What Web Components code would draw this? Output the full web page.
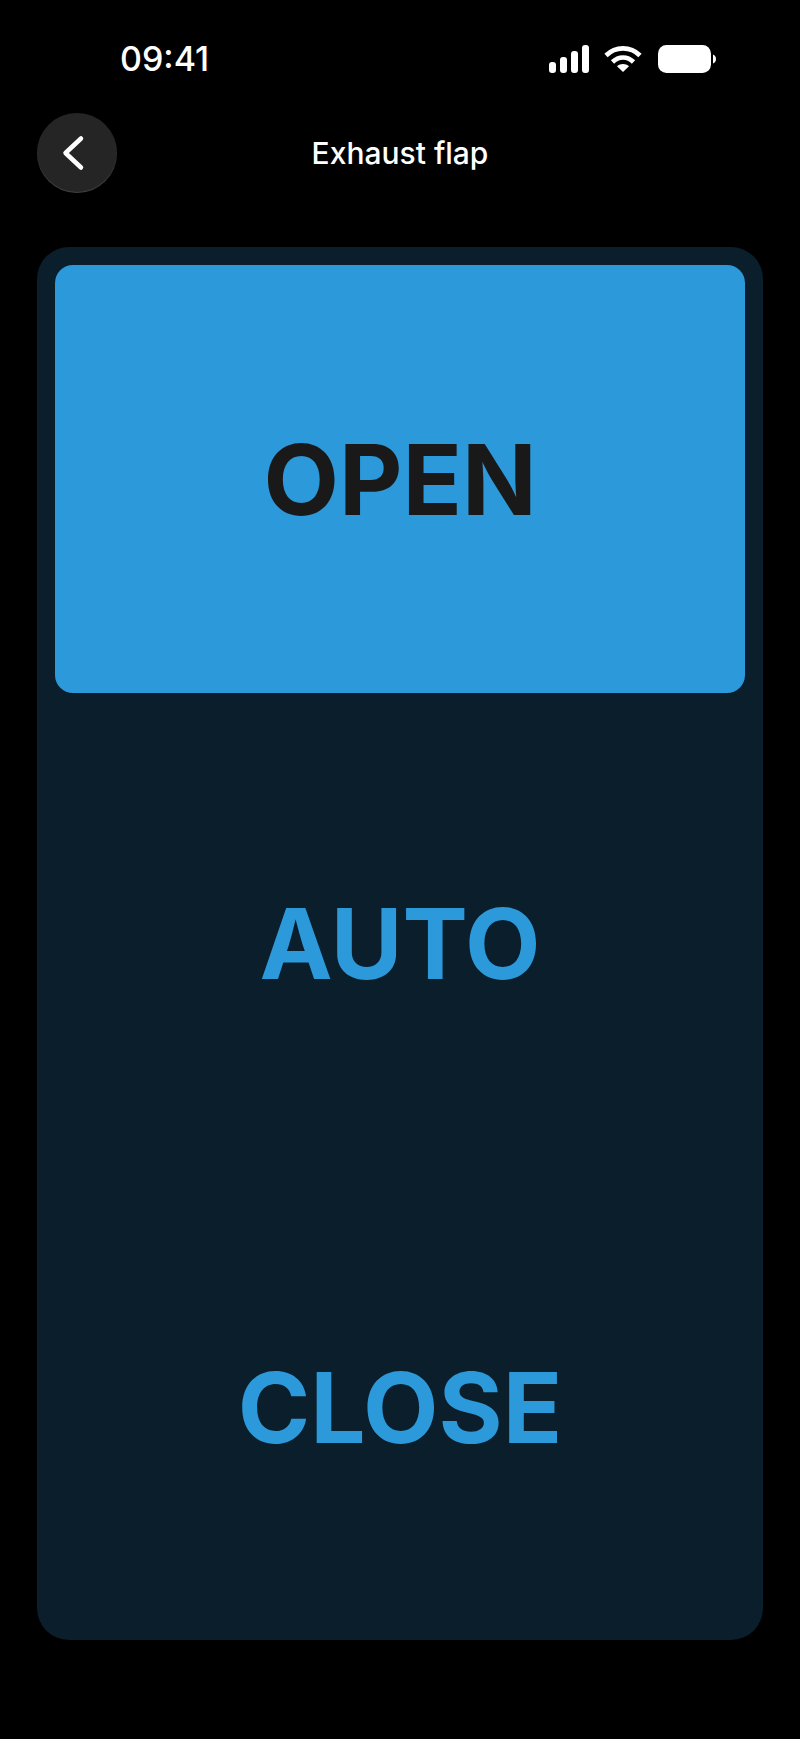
<!DOCTYPE html>
<html>
<head>
<meta charset="utf-8">
<style>
    html, body { margin: 0; background: #000; }
    body { font-family: Inter, "Liberation Sans", sans-serif; color: #fff; }
</style>
</head>
<body>
<flap-screen>
    <status-bar slot="status" time="09:41"></status-bar>
    <nav-header slot="header" title="Exhaust flap"></nav-header>
    <mode-panel>
        <mode-option active>OPEN</mode-option>
        <mode-option>AUTO</mode-option>
        <mode-option>CLOSE</mode-option>
    </mode-panel>
</flap-screen>
<script>
class FlapScreen extends HTMLElement {
    constructor() {
        super();
        const shadow = this.attachShadow({ mode: 'open' });
        shadow.innerHTML = `
            <style>
                :host {
                    display: flex;
                    flex-direction: column;
                    width: 800px;
                    height: 1739px;
                    background: #000;
                    box-sizing: border-box;
                    overflow: hidden;
                }
                main {
                    padding: 0 37px;
                }
            </style>
            <slot name="status"></slot>
            <slot name="header"></slot>
            <main><slot></slot></main>
        `;
    }
}

class StatusBar extends HTMLElement {
    constructor() {
        super();
        const shadow = this.attachShadow({ mode: 'open' });
        shadow.innerHTML = `
            <style>
                :host {
                    display: flex;
                    justify-content: space-between;
                    align-items: center;
                    height: 40px;
                    padding: 39px 84px 34px 120px;
                    box-sizing: content-box;
                }
                .time {
                    font-size: 34px;
                    font-weight: 500;
                    line-height: 40px;
                }
                .icons {
                    display: flex;
                    align-items: center;
                    gap: 14px;
                }
                .battery { margin-left: 2px; }
                svg { display: block; }
            </style>
            <div class="time">${this.getAttribute('time')}</div>
            <div class="icons">
                <svg width="41" height="28" viewBox="0 0 41 28" fill="#fff">
                    <rect x="0" y="17" width="7" height="11" rx="3"/>
                    <rect x="11" y="12" width="7" height="16" rx="3"/>
                    <rect x="22" y="6" width="7" height="22" rx="3"/>
                    <rect x="33" y="0" width="7" height="28" rx="3"/>
                </svg>
                <svg width="38" height="28" viewBox="0 0 38 28" fill="none" stroke="#fff" stroke-width="4.6">
                    <path d="M2 10.5C11.5 1 26.5 1 36 10.5"/>
                    <path d="M8.5 17C14.5 11 23.5 11 29.5 17"/>
                    <path d="M19 27l-6-5.7c3.300-3 8.700-3 12 0z" fill="#fff" stroke="none"/>
                </svg>
                <svg class="battery" width="58" height="28" viewBox="0 0 58 28" fill="#fff">
                    <rect x="0" y="0" width="53" height="28" rx="8.500"/>
                    <path d="M55 9.500c2 .5 3 2.500 3 4.500s-1 4-3 4.500z"/>
                </svg>
            </div>
        `;
    }
}

class NavHeader extends HTMLElement {
    constructor() {
        super();
        const shadow = this.attachShadow({ mode: 'open' });
        shadow.innerHTML = `
            <style>
                :host {
                    display: grid;
                    grid-template-columns: 79.5px 1fr 79.5px;
                    align-items: center;
                    padding: 0 37px;
                    height: 134px;
                    align-content: start;
                }
                .back {
                    width: 79.5px;
                    height: 79.5px;
                    border-radius: 50%;
                    background: #252525;
                    box-sizing: border-box;
                    box-shadow: inset 0 -1px 1px rgba(255,255,255,.14);
                    display: flex;
                    align-items: center;
                    justify-content: center;
                }
                svg { display: block; margin-right: 6px; }
                h1 {
                    margin: 0;
                    text-align: center;
                    font-size: 30px;
                    font-weight: 500;
                    color: #fff;
                }
            </style>
            <div class="back">
                <svg width="23" height="36" viewBox="0 0 23 36" fill="none" stroke="#fff" stroke-width="4.500" stroke-linecap="round" stroke-linejoin="round">
                    <path d="M19 3.500L3.500 18L19 32.500"/>
                </svg>
            </div>
            <h1>${this.getAttribute('title')}</h1>
            <div></div>
        `;
    }
}

class ModePanel extends HTMLElement {
    constructor() {
        super();
        const shadow = this.attachShadow({ mode: 'open' });
        shadow.innerHTML = `
            <style>
                :host {
                    display: flex;
                    flex-direction: column;
                    gap: 36px;
                    padding: 18px;
                    background: #0a1e2b;
                    border-radius: 32px;
                    height: 1393px;
                    box-sizing: border-box;
                }
            </style>
            <slot></slot>
        `;
    }
}

class ModeOption extends HTMLElement {
    constructor() {
        super();
        const shadow = this.attachShadow({ mode: 'open' });
        shadow.innerHTML = `
            <style>
                :host {
                    display: flex;
                    align-items: center;
                    justify-content: center;
                    flex: 1;
                    border-radius: 18px;
                    font-size: 98px;
                    font-weight: 700;
                    color: #2c99db;
                }
                :host([active]) {
                    background: #2c99db;
                    color: #191919;
                }
            </style>
            <slot></slot>
        `;
    }
}

customElements.define('flap-screen', FlapScreen);
customElements.define('status-bar', StatusBar);
customElements.define('nav-header', NavHeader);
customElements.define('mode-panel', ModePanel);
customElements.define('mode-option', ModeOption);
</script>
</body>
</html>
